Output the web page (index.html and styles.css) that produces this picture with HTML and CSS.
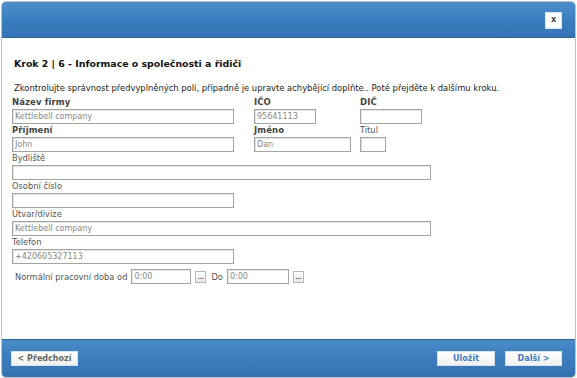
FILE: index.html
```html
<!DOCTYPE html>
<html lang="cs">
<head>
<meta charset="utf-8">
<link rel="stylesheet" href="styles.css">
</head>
<body>
<div class="dialog">
  <div class="header">
    <button class="close">x</button>
  </div>
  <div class="content">
    <h1 class="title">Krok 2 | 6 - Informace o společnosti a řidiči</h1>
    <p class="desc">Zkontrolujte správnost předvyplněných polí, případně je upravte achybějící doplňte.. Poté přejděte k dalšímu kroku.</p>
    <div class="row">
      <div class="field c1"><label class="b">Název firmy</label><input class="w222" value="Kettlebell company"></div>
      <div class="field c2"><label class="b">IČO</label><input class="w62" value="95641113"></div>
      <div class="field c3"><label class="b">DIČ</label><input class="w62" value=""></div>
    </div>
    <div class="row">
      <div class="field c1"><label class="b">Příjmení</label><input class="w222" value="John"></div>
      <div class="field c2"><label class="b">Jméno</label><input class="w97" value="Dan"></div>
      <div class="field c3"><label>Titul</label><input class="w26" value=""></div>
    </div>
    <div class="field"><label>Bydliště</label><input class="w419" value=""></div>
    <div class="field"><label>Osobní číslo</label><input class="w222" value=""></div>
    <div class="field"><label>Útvar/divize</label><input class="w419" value="Kettlebell company"></div>
    <div class="field"><label>Telefon</label><input class="w222" value="+420605327113"></div>
    <div class="time">
      <span class="tl">Normální pracovní doba od</span>
      <input class="w60" value="0:00">
      <button class="dots">...</button>
      <span class="tl">Do</span>
      <input class="w62" value="0:00">
      <button class="dots">...</button>
    </div>
  </div>
  <div class="footer">
    <button class="fbtn prev">&lt; Předchozí</button>
    <div class="spacer"></div>
    <button class="fbtn save">Uložit</button>
    <button class="fbtn next">Další &gt;</button>
  </div>
</div>
</body>
</html>
```
FILE: styles.css
```css
* { box-sizing: border-box; }
html, body { margin: 0; padding: 0; background: #fff; }
body {
  width: 577px; height: 378px; overflow: hidden;
  font-family: "DejaVu Sans", Verdana, sans-serif;
  font-size: 8.3px; color: #333;
}
.dialog {
  margin: 1px 1px 0 1px;
  height: 377px;
  border: 1px solid #b9c4cf;
  border-radius: 5px;
  display: flex; flex-direction: column;
  overflow: hidden;
}
.header {
  height: 36px; flex: none;
  background: linear-gradient(#4d8fcb, #3a7dbe 55%, #3474b4);
  border-bottom: 1px solid #2d6397;
  display: flex; align-items: center; justify-content: flex-end;
  padding-right: 13px;
}
.close {
  width: 17px; height: 17px; padding: 0; margin-top: 1px;
  border: 1px solid #dfe8f1; background: #fff;
  font-family: "DejaVu Sans", sans-serif; font-size: 8px; font-weight: bold; color: #444;
  line-height: 14px;
}
.content { flex: 1; padding: 20px 0 0 10px; }
.title {
  margin: 0 0 0 2px; font-size: 9.4px; font-weight: bold; color: #111;
  line-height: 12px;
}
.desc { margin: 12px 0 2px 2px; font-size: 8.4px; line-height: 12px; color: #222; }
.row { display: flex; }
.c1 { width: 242px; }
.c2 { width: 106px; }
.field label {
  display: block; height: 13px; line-height: 13px; color: #555;
}
.field label.b { font-weight: bold; color: #444; font-size: 8.5px; letter-spacing: 0.1px; }
input {
  display: block; height: 15px; margin: 0; padding: 0 2px;
  border: 1px solid #a4a4a4; background: #fff;
  font-family: "DejaVu Sans", sans-serif; font-size: 8px; color: #888;
  box-shadow: inset 1px 1px 0 #e4e4e4;
}
.w222 { width: 222px; }
.w62 { width: 62px; }
.w60 { width: 60px; }
.w97 { width: 97px; }
.w26 { width: 26px; }
.w419 { width: 419px; }
.time { display: flex; align-items: center; margin-top: 5px; padding-left: 3px; }
.time input { height: 15px; }
.tl { color: #555; margin-right: 4px; }
.time .w60 { margin-right: 4px; }
.time .w62 { margin-right: 4px; }
.dots {
  width: 11px; height: 12px; padding: 0; margin-right: 5px;
  border: 1px solid #b5b5b5; background: linear-gradient(#fff, #e8e8e8);
  font-size: 7px; line-height: 6px; color: #444; font-weight: bold;
}
.footer {
  height: 38px; flex: none;
  background: linear-gradient(#4a8bc8, #3b7dbd 50%, #3572b0);
  border-top: 1px solid #2d6397;
  display: flex; align-items: center; padding: 0 13px 0 9px;
}
.spacer { flex: 1; }
.fbtn {
  height: 15px; padding: 0; border: 1px solid #d6e2ee;
  background: linear-gradient(#ffffff, #f0f0f0);
  font-family: "DejaVu Sans", sans-serif; font-size: 8px; font-weight: bold;
  line-height: 12px;
}
.prev { width: 67px; color: #666; }
.save { width: 58px; color: #3f7cc0; margin-right: 10px; }
.next { width: 57px; color: #3f7cc0; }
```
